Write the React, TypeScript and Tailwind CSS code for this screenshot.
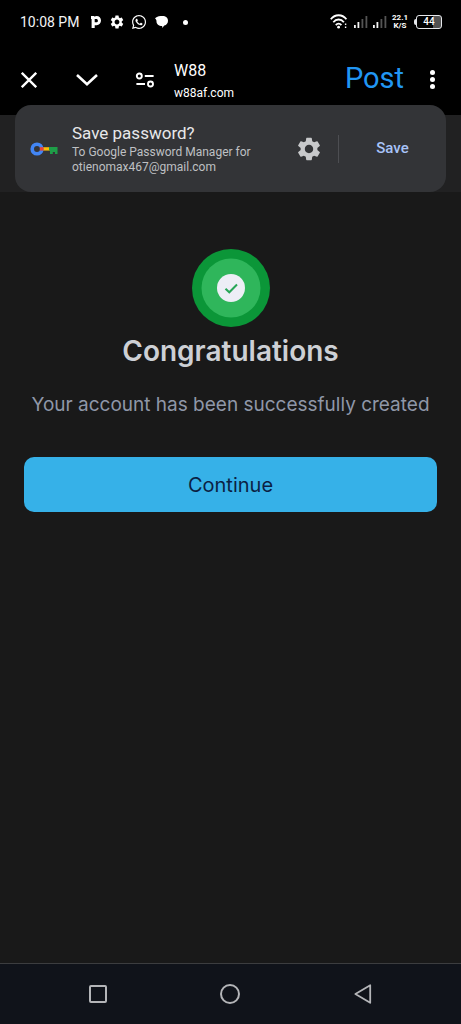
import React from "react";
import { MdSettings } from "react-icons/md";
import { FaWhatsapp } from "react-icons/fa";

const bars = [3, 6, 9, 12];

function Signal() {
  return (
    <svg className="h-3 w-[14px]" viewBox="0 0 14 12" aria-hidden="true">
      {bars.map((h, i) => (
        <rect key={h} x={i * 4 - (i > 0 ? 0.5 : 0)} y={12 - h} width="1.8" height={h} fill={i < 2 ? "#f4f4f4" : "#555"} />
      ))}
    </svg>
  );
}

function StatusBar() {
  return (
    <div className="flex h-11 items-center justify-between pr-[19px] pl-5 text-white">
      <div className="flex items-center">
        <span className="w-[70px] text-[14px] leading-5 whitespace-nowrap text-gray-100">10:08 PM</span>
        <svg className="h-[14px] w-3" viewBox="0 0 12 14" aria-hidden="true">
          <path d="M1 1H3.800L4.300 1.600C5 1.200 5.800 1 6.600 1 9.200 1 11 2.900 11 5.600S9.200 10.200 6.600 10.200H4.700V13H1.600V4H1zM4.700 4v3.300h1.500c1 0 1.700-.6 1.700-1.600S7.200 4 6.200 4z" fill="currentColor" fillRule="evenodd" />
        </svg>
        <MdSettings className="ml-[7px] size-4" aria-hidden="true" />
        <FaWhatsapp className="ml-[6px] size-4" aria-hidden="true" />
        <svg className="ml-2 h-3 w-[14px]" viewBox="0 0 14 12" aria-hidden="true">
          <path d="M0 2.200C2.500.2 5 0 7.500 0 10.800 0 13 1.900 13 4.700 13 7 11.600 8.900 9.300 9.600L7.200 11.900V9.900C3.600 9.900 1.500 8 1.500 5.400 1.500 4 1 3 0 2.200Z" fill="currentColor" />
        </svg>
        <span className="ml-[14px] size-[5px] rounded-full bg-white" />
      </div>
      <div className="flex items-center">
        <svg className="h-4 w-[18px]" viewBox="0 0 18 16" fill="none" stroke="currentColor" strokeWidth="1.8" aria-hidden="true">
          <path d="M.8 5.2C5-.1 12.2-.1 16.4 5.2M3.3 8.2C6.2 4.6 11 4.6 13.9 8.2M5.8 11.1c1.6-1.9 4-1.9 5.6 0" />
          <circle cx="8.6" cy="13.2" r="1.4" fill="currentColor" stroke="none" />
          <path d="M15.6 9.5v1.6M15.6 12.5v1.6" strokeWidth="1.4" />
        </svg>
        <span className="ml-[6px] flex items-center gap-[5px]">
          <Signal />
          <Signal />
        </span>
        <span className="ml-1 flex w-[18px] flex-col items-center text-[8px] leading-[8px] font-bold">
          <span>22.1</span>
          <span>K/S</span>
        </span>
        <span className="ml-[5px] flex items-center">
          <span className="h-[6px] w-[2px] rounded-l-sm bg-gray-200" />
          <span className="flex h-[14px] w-[26px] items-center justify-center rounded-[3px] border border-gray-200 bg-linear-to-r from-black from-65% to-neutral-600 to-65% text-[10px] leading-3 font-medium">
            44
          </span>
        </span>
      </div>
    </div>
  );
}

function Toolbar() {
  return (
    <div className="flex h-[71px] items-center text-white">
      <button type="button" aria-label="Close" className="flex h-12 w-[58px] items-center justify-center">
        <svg className="size-4" viewBox="0 0 16 16" fill="none" stroke="currentColor" strokeWidth="2.3">
          <path d="M.8.8 15.2 15.2M15.2.8.8 15.2" />
        </svg>
      </button>
      <button type="button" aria-label="Minimize" className="flex h-12 w-[58px] items-center justify-center">
        <svg className="h-3 w-[22px]" viewBox="0 0 22 12" fill="none" stroke="currentColor" strokeWidth="2.6">
          <path d="M1 1 11 10.2 21 1" />
        </svg>
      </button>
      <button type="button" aria-label="Site information" className="flex h-12 w-[58px] items-center justify-center">
        <svg className="h-4 w-5" viewBox="0 0 20 16" fill="none" stroke="currentColor" strokeWidth="1.9">
          <circle cx="4.3" cy="4" r="2.5" />
          <path d="M9.8 4H18.6M1.4 12H10" />
          <circle cx="15.5" cy="12" r="2.5" />
        </svg>
      </button>
      <div className="min-w-0 flex-1 pt-[3px]">
        <p className="text-[16px] leading-6">W88</p>
        <p className="text-[12px] leading-5">w88af.com</p>
      </div>
      <button type="button" className="pb-1 text-[29px] leading-9 text-[#2196f3]">
        Post
      </button>
      <button type="button" aria-label="More options" className="flex h-12 w-[57px] flex-col items-center justify-center gap-[2px]">
        <span className="size-[5px] rounded-full bg-white" />
        <span className="size-[5px] rounded-full bg-white" />
        <span className="size-[5px] rounded-full bg-white" />
      </button>
    </div>
  );
}

function PasswordPrompt() {
  return (
    <section className="bg-[#212122] px-[15px]">
      <div className="relative -mt-[10px] flex h-[87px] items-center rounded-2xl bg-[#333437]">
        <div className="flex w-[57px] shrink-0 justify-center">
          <svg className="h-[14px] w-7" viewBox="0 0 28 14" aria-hidden="true">
            <path d="M12 5.2h8v3.4h-8z" fill="#fbbc04" />
            <path d="M19 5h8.5v7H25V9.900h-2.200V12H20V8.600h-1z" fill="#1e9e48" />
            <circle cx="7" cy="7" r="4.8" fill="none" stroke="#4285f4" strokeWidth="3.6" />
            <path d="M9.8 5.2h3.800v3.400H9.800z" fill="#ea4335" />
          </svg>
        </div>
        <div className="min-w-0 flex-1">
          <h2 className="text-[17px] leading-5 text-[#e8e8ea]">Save password?</h2>
          <p className="mt-[2px] text-[12px] leading-[15px] whitespace-nowrap text-[#bfc0c3]">
            To Google Password Manager for
            <br />
            otienomax467@gmail.com
          </p>
        </div>
        <button type="button" aria-label="Password settings" className="flex h-12 w-[58px] items-center justify-center text-[#c8c9cb]">
          <MdSettings className="size-7" />
        </button>
        <span className="h-7 w-px bg-[#4d4e52]" />
        <button type="button" className="h-12 w-[107px] text-[15px] font-medium text-[#a8c3f8]">
          Save
        </button>
      </div>
    </section>
  );
}

function NavBar() {
  return (
    <nav className="flex h-[61px] items-center border-t border-[#3c3d3f] bg-[#10131a] px-8 text-[#b4b5b8]">
      <button type="button" aria-label="Recent apps" className="flex h-12 flex-1 items-center justify-center">
        <span className="size-[18px] rounded-[2px] border-2 border-current" />
      </button>
      <button type="button" aria-label="Home" className="flex h-12 flex-1 items-center justify-center">
        <span className="size-5 rounded-full border-2 border-current" />
      </button>
      <button type="button" aria-label="Back" className="flex h-12 flex-1 items-center justify-center">
        <svg className="h-5 w-[18px]" viewBox="0 0 18 20" fill="none" stroke="currentColor" strokeWidth="1.8" strokeLinejoin="round">
          <path d="M16.2 1.2V18.8L1.4 10Z" />
        </svg>
      </button>
    </nav>
  );
}

export default function App() {
  return (
    <div className="flex min-h-screen flex-col bg-[#191919] font-['Roboto',sans-serif]">
      <header className="bg-black">
        <StatusBar />
        <Toolbar />
      </header>
      <PasswordPrompt />
      <main className="flex flex-1 flex-col items-center px-6 pt-[57px] text-center font-['Inter',sans-serif]">
        <svg className="size-[78px]" viewBox="0 0 78 78" aria-hidden="true">
          <circle cx="39" cy="39" r="39" fill="#0b9638" />
          <circle cx="39" cy="39" r="29.5" fill="#2fb65b" />
          <circle cx="39" cy="39" r="14" fill="#edeef6" />
          <path d="M33.5 39.7 37.3 43.3 45 35.5" fill="none" stroke="#27a657" strokeWidth="2" />
        </svg>
        <h1 className="mt-1 text-[28px] leading-10 font-semibold text-[#cdd0d5]">Congratulations</h1>
        <p className="mt-5 text-[19px] leading-7 whitespace-nowrap text-[#8f97a8]">
          Your account has been successfully created
        </p>
        <button type="button" className="mt-[38px] h-[55px] w-full rounded-[10px] bg-[#36b1e8] text-[20px] text-[#0b1f44]">
          Continue
        </button>
      </main>
      <NavBar />
    </div>
  );
}
